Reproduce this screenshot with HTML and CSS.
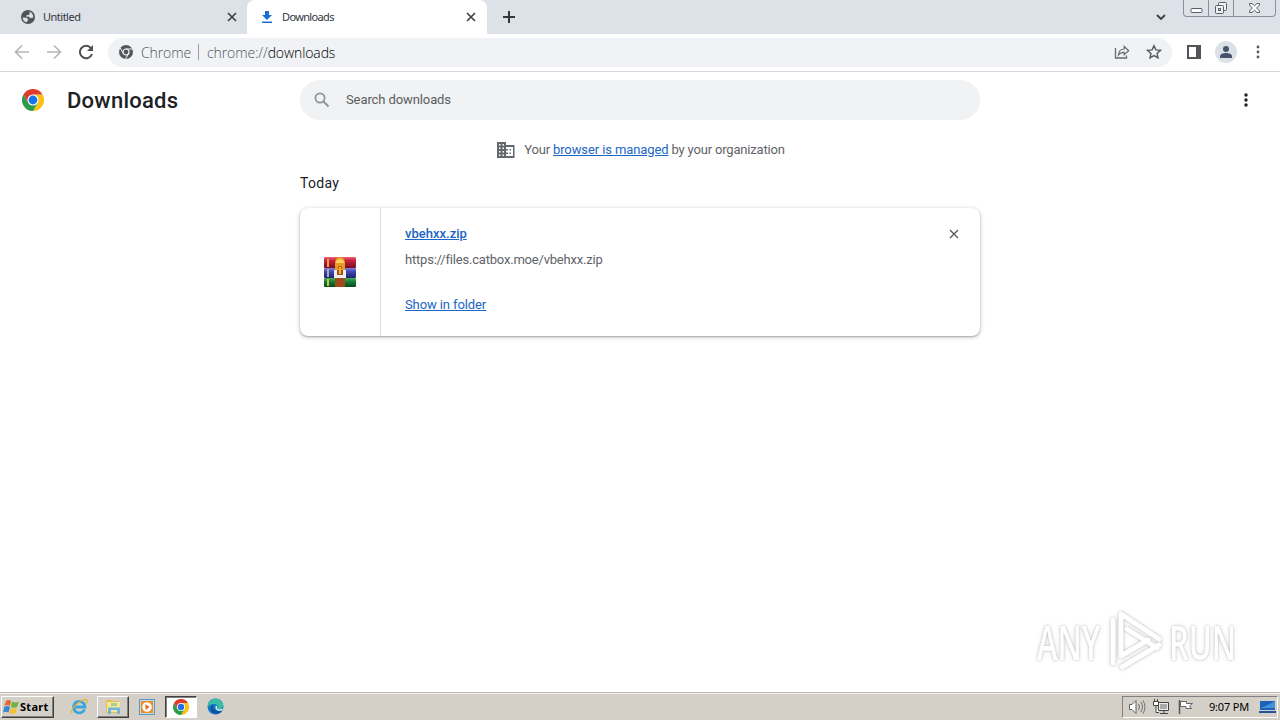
FILE: index.html
```html
<!DOCTYPE html>
<html lang="en">
	<head>
		<meta charset="UTF-8">
		<title>Downloads</title>
		<link rel="stylesheet" href="styles.css">
	</head>
	<body>
		<svg class="defs" width="0" height="0">
			<symbol id="chrome" viewBox="0 0 48 48">
				<path fill="#fbc116" d="M24 12h20.8A24 24 0 0 1 24 48l10.4-18z"/>
				<path fill="#2d9c48" d="M3.2 12l10.4 18h20.8L24 48A24 24 0 0 1 3.2 12z"/>
				<path fill="#df3a2f" d="M3.2 12a24 24 0 0 1 41.6 0H24L13.6 30z"/>
				<circle cx="24" cy="24" r="12" fill="#fff"/>
				<circle cx="24" cy="24" r="9.6" fill="#1a73e8"/>
			</symbol>
			<symbol id="close" viewBox="0 0 10 10">
				<path d="M1 1l8 8M9 1l-8 8" fill="none" stroke="currentColor"/>
			</symbol>
			<symbol id="dots" viewBox="0 0 4 14">
				<g fill="currentColor"><circle cx="2" cy="2" r="1.7"/><circle cx="2" cy="7" r="1.7"/><circle cx="2" cy="12" r="1.7"/></g>
			</symbol>
		</svg>
		<div class="tabs">
			<div class="tab">
				<svg class="favicon" width="14" height="14" viewBox="0 0 14 14"><circle cx="7" cy="7" r="7" fill="#50545a"/><path fill="#dde1e8" d="M1.600 7.500l4 .2 1.700 1.500-.8 1.500-.6 1.600C3.300 11.800 1.700 10 1.600 7.500zM8 1.700l1 1.500-1 1.500-2.200.6L5 6.500l3 .2 1.300 1.600 2.900-.8c.4-2.600-1.500-5.400-4.200-5.800z"/></svg>
				<span>Untitled</span>
				<svg class="x" width="10" height="10"><use href="#close"/></svg>
			</div>
			<div class="tab active">
				<svg class="favicon" width="14" height="14" viewBox="0 0 14 14"><path fill="#1a6fd0" d="M5 1h4v4h3L7 10 2 5h3zM2 11.500h10V13H2z"/></svg>
				<span>Downloads</span>
				<svg class="x" width="10" height="10"><use href="#close"/></svg>
			</div>
			<svg class="plus" width="12" height="12" viewBox="0 0 12 12"><path d="M6 0v12M0 6h12" stroke="#33363d" stroke-width="2"/></svg>
			<svg class="chevron" width="10" height="7" viewBox="0 0 10 7"><path d="M1 1l4 4 4-4" fill="none" stroke="#3c4043" stroke-width="1.800"/></svg>
			<div class="winbtns">
				<div class="min"><svg width="13" height="7"><rect x="1" y="1.500" width="11" height="4" rx="1" fill="#fff" stroke="#5b5f69"/></svg></div>
				<div class="max"><svg width="14" height="14" viewBox="0 0 14 14"><g fill="#eef0f4" stroke="#5b5f69"><rect x="4.500" y="1.500" width="8" height="8" rx="1"/><rect x="1.500" y="4.500" width="8" height="8" rx="1"/><rect x="4.500" y="7.500" width="2" height="2"/></g></svg></div>
				<div class="cls"><svg width="13" height="12" viewBox="0 0 13 12"><path d="M1.500 1.500H4l2.500 2.300L9 1.500h2.500V3L8.600 6l2.900 3v1.500H9L6.500 8.200 4 10.500H1.500V9l2.900-3-2.900-3z" fill="#fff" stroke="#5b5f69"/></svg></div>
			</div>
		</div>
		<div class="toolbar">
			<svg class="back" width="16" height="16" viewBox="0 0 16 16"><path d="M15 8H2M8 1.500L1.500 8 8 14.500" fill="none" stroke="#b5b7ba" stroke-width="1.700"/></svg>
			<svg class="fwd" width="16" height="16" viewBox="0 0 16 16"><path d="M1 8h13M8 1.500L14.500 8 8 14.500" fill="none" stroke="#b5b7ba" stroke-width="1.700"/></svg>
			<svg class="reload" width="16" height="16" viewBox="0 0 16 16"><path d="M13 4.200A6.200 6.200 0 1 0 14 10" fill="none" stroke="#4c4f54" stroke-width="2"/><path d="M15 1v6H9z" fill="#4c4f54"/></svg>
			<div class="omnibox">
				<svg class="site" width="14" height="14" viewBox="0 0 14 14"><circle cx="7" cy="7" r="7" fill="#54585e"/><circle cx="7" cy="7" r="3" fill="none" stroke="#f0f2f5" stroke-width="1.200"/><path d="M7 4h6.500M4.400 8.500L1.200 3M9.600 8.500L6.500 14" stroke="#f0f2f5" stroke-width="1"/></svg>
				<span class="brand">Chrome</span>
				<i class="bar"></i>
				<span class="url">chrome://<b>downloads</b></span>
				<svg class="share" width="16" height="14" viewBox="0 0 16 14"><path d="M1.500 3v10h11v-2.500" fill="none" stroke="#686b70" stroke-width="1.300"/><path d="M4.500 10c.3-4 2.300-6 5.700-6V1.500l4.500 4.200-4.500 4V7.300c-2.600 0-4.300.7-5.700 2.700z" fill="none" stroke="#686b70" stroke-width="1.200"/></svg>
				<svg class="star" width="16" height="16" viewBox="0 0 16 16"><path d="M8 1.700l1.900 4.200 4.500.5-3.400 3 1 4.500L8 11.600l-4 2.300 1-4.500-3.400-3 4.500-.5z" fill="none" stroke="#54575c" stroke-width="1.400"/></svg>
			</div>
			<svg class="panel" width="14" height="14"><path d="M0 0h14v14H0zM2 2v10h7V2z" fill="#515459" fill-rule="evenodd"/></svg>
			<svg class="avatar" width="22" height="22"><circle cx="11" cy="11" r="11" fill="#dce1e7"/><circle cx="11" cy="8" r="3" fill="#46536d"/><path d="M5 17v-1.500C5 13 8 12 11 12s6 1 6 3.500V17z" fill="#46536d"/></svg>
			<svg class="kebab" width="4" height="14" viewBox="0 0 4 14"><g fill="#55585d"><circle cx="2" cy="2" r="1.400"/><circle cx="2" cy="7" r="1.400"/><circle cx="2" cy="12" r="1.400"/></g></svg>
		</div>
		<div class="page">
			<div class="header">
				<svg class="logo" width="22" height="22"><use href="#chrome"/></svg>
				<h1>Downloads</h1>
				<div class="search">
					<svg width="16" height="16" viewBox="0 0 16 16"><circle cx="6" cy="6" r="4.600" fill="none" stroke="#909397" stroke-width="1.800"/><path d="M9.500 9.500l5 5" stroke="#909397" stroke-width="2"/></svg>
					<span>Search downloads</span>
				</div>
				<svg class="more" width="4" height="14"><use href="#dots"/></svg>
			</div>
			<div class="managed">
				<svg width="18" height="16" viewBox="0 0 18 16"><path d="M0 0h9v3h8.500v13H0z" fill="#64686d"/><path d="M2 2h1.500v1.500H2zM5.500 2H7v1.500H5.500zM2 5.500h1.500V7H2zM5.500 5.500H7V7H5.500zM2 9h1.500v1.500H2zM5.500 9H7v1.500H5.500zM2 12.500h1.500V14H2zM5.500 12.500H7V14H5.500zM9 5h7v9H9z" fill="#fff"/><path d="M9 7h2v1.500H9zM9 10.500h2V12H9zM12.500 7H14v1.500h-1.500zM12.500 10.500H14V12h-1.500z" fill="#64686d"/></svg>
				<p>Your <a>browser is managed</a> by your organization</p>
			</div>
			<div class="list">
				<h2>Today</h2>
				<div class="card">
					<div class="thumb">
						<svg width="32" height="32" viewBox="0 0 32 32">
							<defs>
								<linearGradient id="red" x2="0" y2="1"><stop offset="0" stop-color="#f06a78"/><stop offset=".3" stop-color="#c7243d"/><stop offset="1" stop-color="#760d20"/></linearGradient>
								<linearGradient id="blue" x2="0" y2="1"><stop offset="0" stop-color="#8580dc"/><stop offset=".35" stop-color="#4148b4"/><stop offset="1" stop-color="#20236c"/></linearGradient>
								<linearGradient id="green" x2="0" y2="1"><stop offset="0" stop-color="#48ad55"/><stop offset=".4" stop-color="#168038"/><stop offset="1" stop-color="#064818"/></linearGradient>
							</defs>
							<rect y="1" width="32" height="11" rx="1" fill="url(#red)"/>
							<rect y="12" width="32" height="10" rx="1" fill="url(#blue)"/>
							<rect y="22" width="32" height="9" rx="1" fill="url(#green)"/>
							<path d="M3 3h2v8H3z" fill="#f1a13b"/><path d="M3 13h2v8H3z" fill="#b5a9b0"/><path d="M3 23h2v7H3z" fill="#c9c63d"/>
							<path d="M11 22h10v9H11z" fill="#a34a1c"/>
							<path d="M11 14V6q1-5 5-5t5 5v8z" fill="#e99a22"/><path d="M12 5q4-4 8 0v2h-8z" fill="#ffd05c"/><path d="M14 10h4v3h-4z" fill="#b8641d"/>
							<path d="M10 14h3v5h6v-5h3v8H10z" fill="#eee"/><path d="M13 14h6v5h-6z" fill="#a5501f"/><path d="M15 11h2v7h-2z" fill="#f4b52a"/>
						</svg>
					</div>
					<div class="info">
						<a class="name">vbehxx.zip</a>
						<p class="src">https://files.catbox.moe/vbehxx.zip</p>
						<a class="show">Show in folder</a>
					</div>
					<svg class="remove" width="10" height="10"><use href="#close"/></svg>
				</div>
			</div>
			<div class="watermark">
				<span>ANY</span>
				<svg width="60" height="64" viewBox="0 0 60 64">
					<path d="M16 5l38 25M16 5v42M22 20l30 19M8 11v43M17 58l37-22M16 47l27-16" fill="none" stroke="#fff" stroke-width="5" stroke-linecap="round"/>
				</svg>
				<span>RUN</span>
			</div>
		</div>
		<div class="taskbar">
			<div class="start">
				<svg width="17" height="16" viewBox="0 0 17 16"><path d="M3 2q3-2 5 0L7 7Q4 5 1.500 7z" fill="#e8652b"/><path d="M9 2.500q3 2 7 0L14 8q-3 1.500-6 0z" fill="#6fb23d"/><path d="M1.300 8Q4 6 7 8l-1.500 5.500Q3 12 0 13.500z" fill="#3686d2"/><path d="M8 9q3 1.500 6 0l-1.500 5q-3 2-6 0z" fill="#f5c12d"/></svg>
				<span>Start</span>
			</div>
			<div class="task">
				<svg width="18" height="18" viewBox="0 0 18 18"><path d="M14.500 11.500A5.700 5.700 0 1 1 15 9H4" fill="none" stroke="#3aa5df" stroke-width="2.800"/><path d="M2 15C-1 11 14-1 17 2c.7 1 0 2.500-.6 3.500" fill="none" stroke="#e6b432" stroke-width="1.300"/></svg>
			</div>
			<div class="task raised">
				<svg width="18" height="18" viewBox="0 0 18 18"><path d="M2 2h5l1 1h7v12H2z" fill="#e5bd50"/><path d="M3 4h13v10H3z" fill="#f7e59a"/><path d="M4 16V9.500h12V16h-3v-4H7v4z" fill="#70b5dc"/><path d="M7 5h6v3H7z" fill="#a5d28d"/></svg>
			</div>
			<div class="task">
				<svg width="16" height="16" viewBox="0 0 16 16"><rect x=".5" y=".5" width="15" height="15" fill="#bddcf0" stroke="#5a98c6"/><rect x="2" y="2" width="12" height="12" fill="#f28b1e"/><circle cx="8" cy="8" r="4.800" fill="#fff"/><path d="M6.500 5l4 3-4 3z" fill="#e76b10"/></svg>
			</div>
			<div class="task pressed">
				<svg width="16" height="16"><use href="#chrome"/></svg>
			</div>
			<div class="task">
				<svg width="17" height="17" viewBox="0 0 17 17"><circle cx="8.500" cy="8.500" r="8" fill="#1475c4"/><path d="M1 6C3 0 13-2 16 6c1 4-2 6-5.500 5 1-2 .5-5-3.500-5-3 0-5 1-6 3z" fill="#38bea5"/><path d="M7 7c-3 3 0 7 7 6l1-.5C12 17 6 17 4 12c-.8-2 .4-5 3-5z" fill="#104f9c"/><path d="M9 7.500c2 1 1 2.500 1 3 2 1.500 5 .8 6 0l-1 2c-4 1-8-1-6-5z" fill="#e9f5fb"/></svg>
			</div>
			<div class="tray">
				<svg width="18" height="16" viewBox="0 0 18 16"><path d="M1.500 5.500h2.500l4-4v13l-4-4H1.500z" fill="#fff" stroke="#606060"/><path d="M10.500 5q2 3 0 6M12.800 3q3.400 5 0 10M15 1.500q4 6.500 0 13" fill="none" stroke="#707070"/></svg>
				<svg width="17" height="16" viewBox="0 0 17 16"><path d="M5.500 3.500h10v8h-10zM7 14.500h8M11 12v2" fill="#eee" stroke="#444"/><path d="M7 5h7v5H7z" fill="#aaa"/><path d="M.5 2.500h5v4h-5zM1.500 0v3M4.500 0v3M3 7v6.500h3" fill="#fff" stroke="#444"/></svg>
				<svg width="17" height="16" viewBox="0 0 17 16"><path d="M2.500 1v14" stroke="#555" stroke-width="1.500"/><path d="M3.500 2.500h6v2h6L12.500 7l2 2.500H9v-2H3.500z" fill="#fff" stroke="#666"/></svg>
				<span>9:07 PM</span>
				<svg class="desk" width="17" height="14" viewBox="0 0 17 14"><path d="M1 1h15v9H1z" fill="#1b62b8"/><path d="M1 8Q8 6 16 1v7z" fill="#4591dc"/><path d="M0 11h17v2H0z" fill="#26549a"/></svg>
			</div>
		</div>
	</body>
</html>
```
FILE: styles.css
```css
*{
	margin: 0;
	padding: 0;
	box-sizing: border-box;
}
body{
	width: 1280px;
	height: 720px;
	overflow: hidden;
	display: flex;
	flex-direction: column;
	background: #fff;
	font-family: Roboto, "Liberation Sans", sans-serif;
	font-size: 13px;
}
svg{
	display: block;
	flex: none;
}
.defs{
	position: absolute;
}
.tabs{
	height: 34px;
	flex: none;
	display: flex;
	align-items: center;
	background: #dde1e8;
	font: 11px "Noto Sans", sans-serif;
	color: #34373c;
}
.tab{
	width: 247px;
	height: 34px;
	display: flex;
	align-items: center;
	padding: 0 10px 0 21px;
}
.tab span{
	margin-left: 8px;
	padding-bottom: 2px;
	letter-spacing: -0.5px;
}
.tab .x{
	margin-left: auto;
	color: #3f4247;
	stroke-width: 1.7px;
}
.tab.active{
	width: 240px;
	padding: 0 11px 0 13px;
	background: #fff;
	border-radius: 8px 8px 0 0;
}
.active span{
	letter-spacing: -0.65px;
}
.plus{
	margin-left: 16px;
}
.chevron{
	margin-left: auto;
}
.winbtns{
	width: 93px;
	height: 17px;
	margin: 0 4px 0 17px;
	align-self: flex-start;
	display: flex;
	border: 1px solid #8b8f98;
	border-top: 0;
	border-radius: 0 0 4px 4px;
}
.winbtns div{
	display: flex;
	align-items: center;
	justify-content: center;
}
.min{
	width: 24px;
	padding-top: 4px;
}
.max{
	width: 26px;
	border: solid #8b8f98;
	border-width: 0 1px;
}
.cls{
	flex: 1;
}
.toolbar{
	height: 38px;
	flex: none;
	display: flex;
	align-items: center;
	padding: 0 20px 1px 14px;
	border-bottom: 1px solid #d7d9dc;
}
.fwd{
	margin-left: 16px;
}
.reload{
	margin-left: 16px;
}
.omnibox{
	width: 1064px;
	height: 29px;
	margin-left: 14px;
	padding: 0 10px 0 11px;
	display: flex;
	align-items: center;
	background: #f0f2f5;
	border-radius: 15px;
	font: 300 14px "Open Sans", "Noto Sans", sans-serif;
	letter-spacing: -0.1px;
	color: #53565b;
}
.brand{
	margin-left: 8px;
	width: 49px;
}
.bar{
	width: 1px;
	height: 16px;
	margin: 0 8px;
	background: #9a9da1;
}
.url b{
	font-weight: 300;
	color: #000;
}
.share{
	margin-left: auto;
}
.star{
	margin-left: 16px;
}
.panel{
	margin-left: 15px;
}
.avatar{
	margin-left: 14px;
}
.kebab{
	margin-left: auto;
}
.page{
	flex: 1;
	display: flex;
	flex-direction: column;
}
.header{
	height: 56px;
	display: flex;
	align-items: center;
	padding: 0 32px 0 22px;
}
h1{
	width: 233px;
	margin-left: 23px;
	font-size: 22px;
	font-weight: 500;
	letter-spacing: 0.25px;
	color: #202124;
}
.search{
	width: 680px;
	height: 40px;
	padding-left: 14px;
	display: flex;
	align-items: center;
	background: #f0f2f4;
	border-radius: 20px;
	color: #5a5d61;
}
.search span{
	margin-left: 16px;
	padding-bottom: 2px;
	letter-spacing: -0.1px;
}
.more{
	margin-left: auto;
	color: #202124;
}
.managed{
	height: 44px;
	display: flex;
	align-items: center;
	justify-content: center;
	padding-left: 2px;
	letter-spacing: -0.18px;
	color: #5f6368;
}
.managed p{
	margin-left: 9px;
	padding-bottom: 2px;
}
.managed a{
	letter-spacing: -0.1px;
}
a{
	color: #1c66c6;
	text-decoration: underline;
}
.list{
	width: 680px;
	margin: 0 auto;
}
h2{
	height: 36px;
	line-height: 22px;
	font-size: 14px;
	font-weight: 400;
	letter-spacing: 0.3px;
	color: #202124;
}
.card{
	height: 128px;
	display: flex;
	border-radius: 8px;
	box-shadow: 0 1px 2px rgba(60,64,67,.4), 0 1px 4px 1px rgba(60,64,67,.15);
}
.thumb{
	width: 81px;
	display: flex;
	align-items: center;
	justify-content: center;
	border-right: 1px solid #d8dadd;
}
.info{
	flex: 1;
	padding: 18px 0 0 24px;
	line-height: 16px;
}
.info a{
	display: block;
	width: max-content;
}
.name{
	font-weight: 500;
}
.src{
	margin: 10px 0 29px;
	letter-spacing: -0.2px;
	color: #5f6368;
}
.show{
	letter-spacing: -0.1px;
}
.remove{
	margin: 21px 21px 0 0;
	color: #54575c;
	stroke-width: 1.3px;
}
.watermark{
	margin: auto 47px 19px auto;
	display: flex;
	align-items: center;
	gap: 4px;
	font: 600 47px/60px "Open Sans", sans-serif;
	color: #fff;
	filter: drop-shadow(0 0 1px rgba(0,0,0,.22)) drop-shadow(0 0 2px rgba(0,0,0,.12));
}
.watermark span{
	width: 64px;
	padding-top: 2px;
	transform: scaleX(.66);
	transform-origin: 0 50%;
}
.taskbar{
	height: 28px;
	flex: none;
	display: flex;
	align-items: center;
	padding: 0 2px 0 1px;
	background: #d4d0c8;
	border-top: 1px solid #b9b6af;
	box-shadow: inset 0 1px #f4f3f0;
}
.start{
	width: 53px;
	height: 22px;
	margin-right: 9px;
	display: flex;
	align-items: center;
	padding-left: 1px;
	border: 1px solid;
	border-color: #fff #404040 #404040 #fff;
	box-shadow: inset -1px -1px #808080;
	font: 700 11px "Noto Sans", sans-serif;
	letter-spacing: 0.3px;
}
.task{
	width: 32px;
	height: 22px;
	margin-right: 2px;
	display: flex;
	align-items: center;
	justify-content: center;
}
.raised{
	border: 1px solid;
	border-color: #fff #404040 #404040 #fff;
	box-shadow: inset -1px -1px #808080;
}
.pressed{
	background: #fff;
	border: 1px solid;
	border-color: #404040 #fff #fff #404040;
	box-shadow: inset 1px 1px #808080;
}
.tray{
	width: 156px;
	height: 22px;
	margin-left: auto;
	padding: 0 1px 0 5px;
	display: flex;
	align-items: center;
	gap: 7px;
	border: 1px solid;
	border-color: #808080 #fff #fff #808080;
	font: 11px "Noto Sans", sans-serif;
	letter-spacing: -0.2px;
}
.tray span{
	margin-left: 8px;
	white-space: nowrap;
}
.desk{
	margin-left: auto;
}
```
